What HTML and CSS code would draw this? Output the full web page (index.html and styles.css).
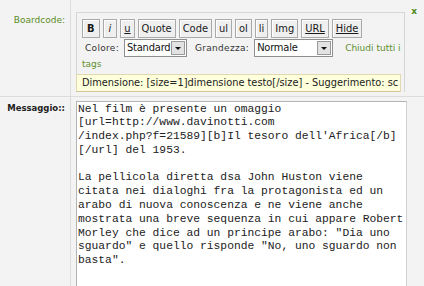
FILE: index.html
```html
<!DOCTYPE html>
<html lang="it">
<head>
    <meta charset="UTF-8">
    <title>Messaggio</title>
    <link rel="stylesheet" href="styles.css">
</head>
<body>
    <div class="form">
        <div class="row">
            <div class="label green">Boardcode:</div>
            <div class="cell top">
                <div class="editor">
                    <div class="buttons">
                        <span class="btn bold">B</span>
                        <span class="btn ital">i</span>
                        <span class="btn under">u</span>
                        <span class="btn">Quote</span>
                        <span class="btn">Code</span>
                        <span class="btn">ul</span>
                        <span class="btn">ol</span>
                        <span class="btn">li</span>
                        <span class="btn">Img</span>
                        <span class="btn under">URL</span>
                        <span class="btn under">Hide</span>
                    </div>
                    <div class="options"><span class="opt">Colore:</span><span class="select sel-color"><span class="val">Standard</span><span class="arrow"></span></span><span class="opt opt-size">Grandezza:</span><span class="select sel-size"><span class="val">Normale</span><span class="arrow"></span></span><a class="close-tags">Chiudi tutti i tags</a></div>
                    <div class="help">Dimensione: [size=1]dimensione testo[/size] - Suggerimento: sc</div>
                </div>
                <span class="close-x">x</span>
            </div>
        </div>
        <div class="row">
            <div class="label msg">Messaggio::</div>
            <div class="cell">
                <textarea class="message" wrap="off">Nel film è presente un omaggio
[url=http://www.davinotti.com
/index.php?f=21589][b]Il tesoro dell'Africa[/b]
[/url] del 1953.

La pellicola diretta dsa John Huston viene
citata nei dialoghi fra la protagonista ed un
arabo di nuova conoscenza e ne viene anche
mostrata una breve sequenza in cui appare Robert
Morley che dice ad un principe arabo: "Dia uno
sguardo" e quello risponde "No, uno sguardo non
basta".</textarea>
            </div>
        </div>
    </div>
</body>
</html>
```

FILE: styles.css
```css
body { margin: 0; background: #f3f3f3; color: #222; font-family: "DejaVu Sans Condensed", "DejaVu Sans", sans-serif; }
.form { width: 424px; }
.row { display: grid; grid-template-columns: 71px 1fr; border-bottom: 1px solid #dcdcdc; }
.label { border-right: 1px solid #dcdcdc; text-align: right; padding: 15px 5px 0 0; font-family: "DejaVu Sans", sans-serif; font-size: 9px; line-height: 11px; }
.green { color: #5a8c26; }
.msg { font-weight: bold; font-size: 8.5px; padding-top: 6px; color: #222; }
.cell { padding: 4px 0 0 5px; }
.top { position: relative; padding: 12px 0 4px 5px; }

.editor { width: 329px; box-sizing: border-box; border: 1px solid #d6d6d6; border-bottom: none; padding-top: 6px; }
.buttons { display: flex; gap: 3px; padding-left: 5px; }
.btn { height: 19px; box-sizing: border-box; padding: 0 3px; border: 1px solid #a9a9a9; background: #efefef; box-shadow: inset 1px 1px #fff; font-size: 11px; line-height: 17px; color: #1a1a1a; }
.bold { font-weight: bold; padding: 0 4px; }
.ital { font-style: italic; padding: 0 5px; }
.under { text-decoration: underline; }

.options { margin-top: 1px; padding-left: 5px; text-indent: 3px; font-family: "DejaVu Sans", sans-serif; font-size: 9px; line-height: 12px; }
.opt { color: #333; letter-spacing: 0.3px; margin-right: 5px; vertical-align: middle; }
.opt-size { margin-left: 8px; }
.select { display: inline-block; position: relative; height: 18px; box-sizing: border-box; border: 1px solid #8f8f8f; background: #fff; text-indent: 0; vertical-align: middle; overflow: hidden; }
.sel-color { width: 63px; }
.sel-size { width: 79px; }
.val { display: block; padding-left: 2px; font-family: "DejaVu Sans Condensed", sans-serif; font-size: 11px; letter-spacing: -0.2px; line-height: 16px; color: #111; white-space: nowrap; }
.arrow { position: absolute; top: 1px; right: 1px; width: 14px; height: 14px; box-sizing: border-box; border: 1px solid #9a9a9a; background: #e2e2e2; }
.arrow::after { content: ""; position: absolute; left: 3px; top: 5px; border-left: 3px solid transparent; border-right: 3px solid transparent; border-top: 3px solid #111; }
.close-tags { color: #5f9030; margin-left: 12px; vertical-align: middle; }

.help { width: 325px; box-sizing: border-box; height: 18px; margin: 4px 0 0 -1px; padding-left: 5px; border: 1px solid #e3d9b0; border-bottom-color: #d4c597; background: #ffffdb; font-size: 10.9px; line-height: 16px; white-space: nowrap; overflow: hidden; color: #222; }
.close-x { position: absolute; top: 6px; right: 7px; color: #4f8a1c; font-family: "DejaVu Sans", sans-serif; font-weight: bold; font-size: 9px; }

.message { display: block; width: 331px; height: 200px; box-sizing: border-box; margin: 0; padding: 1px; border: 1px solid #b4b4b4; border-right-color: #d0d0d0; background: #fff; color: #222; font-family: "Liberation Mono", monospace; font-size: 11.3px; line-height: 13.8px; white-space: pre; overflow: hidden; resize: none; }
```
